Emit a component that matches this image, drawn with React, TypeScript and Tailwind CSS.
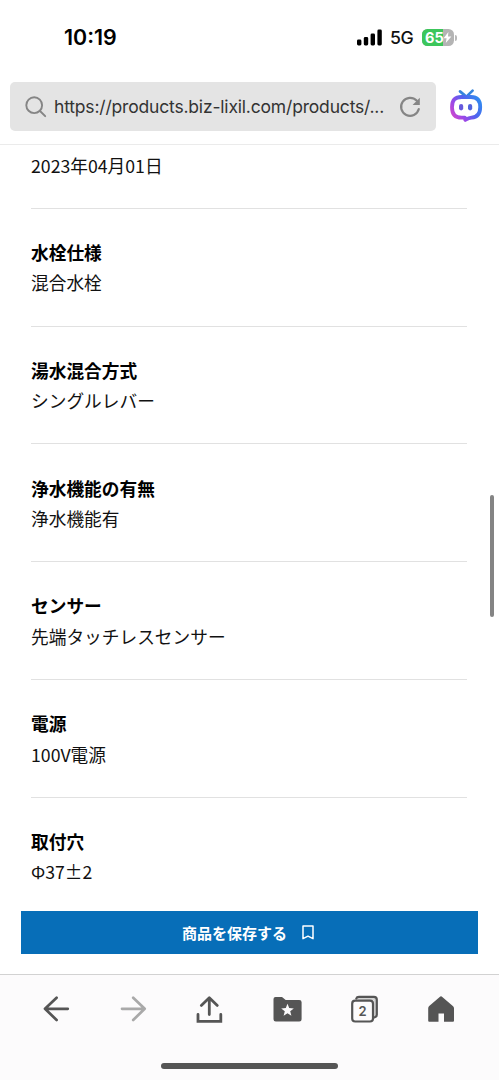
import type { ReactNode } from 'react';

const specs = [
  { label: '水栓仕様', value: '混合水栓' },
  { label: '湯水混合方式', value: 'シングルレバー' },
  { label: '浄水機能の有無', value: '浄水機能有' },
  { label: 'センサー', value: '先端タッチレスセンサー' },
  { label: '電源', value: '100V電源' },
  { label: '取付穴', value: 'Φ37±2' },
];

function StatusBar() {
  return (
    <div className="flex h-[75px] items-center pl-[64px] pr-[42px]">
      <span className="pt-px font-['Inter','Liberation_Sans',sans-serif] text-[21.4px] font-semibold leading-none text-black">
        10:19
      </span>
      <svg className="ml-auto" width="26" height="17" viewBox="0 0 26 17" fill="#000">
        <rect x="0" y="10.5" width="4.4" height="6" rx="1.4" />
        <rect x="6.8" y="8" width="4.4" height="8.5" rx="1.4" />
        <rect x="13.6" y="4.5" width="4.4" height="12" rx="1.4" />
        <rect x="20.4" y="0.6" width="4.4" height="15.9" rx="1.4" />
      </svg>
      <span className="ml-[7px] w-[24px] pt-px font-['Inter','Liberation_Sans',sans-serif] text-[17.7px] font-medium leading-none tracking-tight text-[#111]">
        5G
      </span>
      {/* Battery */}
      <div className="relative ml-[8px] h-[17px] w-[32px] overflow-hidden rounded-[5.5px] bg-[#b4b4b4]">
        <div className="h-full w-[21px] bg-[#3cc65b]" />
        <span className="absolute left-[3px] top-0 font-['Inter','Liberation_Sans',sans-serif] text-[14.5px] font-bold leading-[17px] text-white">
          65
        </span>
        <svg className="absolute left-[21px] top-[3px]" width="9" height="11" viewBox="0 0 9 11" fill="#fff">
          <path d="M5.4 0 0.6 6.2h3L2.8 11 8.4 4.6H5z" />
        </svg>
      </div>
      <div className="ml-px h-[6px] w-[2px] rounded-r-full bg-[#b9b9b9]" />
    </div>
  );
}

function AddressBar() {
  return (
    <div className="flex h-[69px] items-start pl-[10px] pt-[7px]">
      <div className="flex h-[49px] w-[426px] items-center rounded-[5px] bg-[#e4e4e4] pl-[15px]">
        <svg width="22" height="22" viewBox="0 0 22 22" fill="none" stroke="#858585" strokeWidth="1.9" strokeLinecap="round">
          <circle cx="9.2" cy="9.2" r="7.9" />
          <path d="m15 15 5.2 5.2" />
        </svg>
        <span className="ml-[7px] w-[339px] whitespace-nowrap pt-[2px] font-['Inter','Liberation_Sans',sans-serif] text-[17.5px] tracking-[-0.18px] text-[#333]">
          https://products.biz-lixil.com/products/...
        </span>
        <svg className="ml-[6px]" width="22" height="22" viewBox="0 0 22 22" fill="none">
          <path d="M17.6 4.6A9 9 0 1 0 19.8 13" stroke="#858585" strokeWidth="2.2" strokeLinecap="round" />
          <path d="M20.8 1.8v7.2h-7.2z" fill="#858585" />
        </svg>
      </div>
      <svg className="ml-[13px] mt-[6px]" width="34" height="36" viewBox="0 0 34 36" fill="none">
        <defs>
          <linearGradient id="bot" x1="2" y1="30" x2="31" y2="10" gradientUnits="userSpaceOnUse">
            <stop offset="0" stopColor="#d946c6" />
            <stop offset="0.3" stopColor="#9a48e8" />
            <stop offset="0.6" stopColor="#5263ee" />
            <stop offset="1" stopColor="#2f8df0" />
          </linearGradient>
        </defs>
        <path d="m11 3.4 4.8 4M23.6 2.6l-5.2 5" stroke="#3484dc" strokeWidth="2.7" strokeLinecap="round" />
        <path
          d="M12.500 9h9.500c6.500 0 9.200 3.300 9.200 10 0 7-3 10.200-8.600 10.600-3 .3-4.700 1.400-6.300 2.300l-.4-2.200h-3.400c-6.800 0-9.500-3.500-9.500-10.500S5.800 9 12.500 9z"
          stroke="url(#bot)"
          strokeWidth="3.800"
          strokeLinejoin="round"
        />
        <rect x="10" y="16" width="4.200" height="6.400" rx="2.100" fill="#6659dd" />
        <rect x="19" y="16" width="4.200" height="6.400" rx="2.100" fill="#5263dd" />
      </svg>
    </div>
  );
}

function SpecRow({ label, value }: { label: string; value: string }) {
  return (
    <div className="border-b border-[#e1e1e1] pb-[28px] pt-[28.2px] leading-[30.3px] last:border-b-0">
      <dt className="font-bold text-black">{label}</dt>
      <dd className="text-[#111]">{value}</dd>
    </div>
  );
}

function NavButton({ label, children }: { label: string; children: ReactNode }) {
  return (
    <button aria-label={label} className="flex h-[32px] w-[76.9px] items-center justify-center">
      {children}
    </button>
  );
}

function Toolbar() {
  return (
    <footer className="flex h-[106px] shrink-0 flex-col items-center border-t border-[#d2d2d2] bg-[#fcfbfc]">
      <nav className="flex w-full pl-[18px] pt-[18px] text-[#555]">
        <NavButton label="戻る">
          <svg width="28" height="28" viewBox="0 0 28 28" fill="none" stroke="currentColor" strokeWidth="2.700" strokeLinecap="round" strokeLinejoin="round">
            <path d="M25.800 13.800H3M14.600 2.800 3 13.800 14.600 25" />
          </svg>
        </NavButton>
        <NavButton label="進む">
          <svg className="text-[#a9a9a9]" width="28" height="28" viewBox="0 0 28 28" fill="none" stroke="currentColor" strokeWidth="2.700" strokeLinecap="round" strokeLinejoin="round">
            <path d="M3 13.800h22.700M14.200 2.800 25.700 13.800 14.200 25" />
          </svg>
        </NavButton>
        <NavButton label="共有">
          <svg width="28" height="28" viewBox="0 0 28 28" fill="none" stroke="currentColor" strokeWidth="2.800" strokeLinecap="round">
            <path d="M13.300 19.500V3M5.300 10.400 13.300 2.800l8 7.600" strokeLinejoin="round" />
            <path d="M2 19.500v6.800h22.800v-6.800" />
          </svg>
        </NavButton>
        <NavButton label="ブックマーク">
          <svg width="30" height="28" viewBox="0 0 30 28">
            <path d="M3.500 2h6.500l3.700 3H27.300a2.300 2.300 0 0 1 2.300 2.300v17a2.300 2.300 0 0 1-2.300 2.300H3.800a2.300 2.300 0 0 1-2.300-2.300V4a2 2 0 0 1 2-2z" fill="currentColor" />
            <path d="m15.500 8.800 1.700 4.300 4.600.3-3.600 2.900 1.200 4.500-3.900-2.500-3.900 2.500 1.200-4.500-3.600-2.900 4.600-.3z" fill="#fcfbfc" />
          </svg>
        </NavButton>
        <NavButton label="タブ">
          <span className="relative flex size-[28px] items-center justify-center">
            <svg className="absolute inset-0" width="28" height="28" viewBox="0 0 28 28" fill="none" stroke="currentColor" strokeWidth="2.200" strokeLinecap="round">
              <path d="M6.300 4.500Q6.600 1.900 9 1.900h14.900q2.700 0 2.700 2.700v15q0 2.600-2.700 2.900V5.200z" fill="#d4d4d4" stroke="none" />
              <rect x="2.200" y="5.700" width="20.800" height="20.800" rx="3" fill="#fcfbfc" />
              <path d="M6.300 3.500Q6.800 1.800 9 1.800h14.900q2.900 0 2.900 2.900v15q0 2.200-2.500 2.800" />
            </svg>
            <span className="relative mr-[3px] mt-[5px] font-['Inter','Liberation_Sans',sans-serif] text-[13px] font-semibold leading-none">
              2
            </span>
          </span>
        </NavButton>
        <NavButton label="ホーム">
          <svg width="28" height="28" viewBox="0 0 28 28" fill="currentColor">
            <path d="M12.700 1.900Q14 .8 15.300 1.900L25.800 11q1.200 1 1.200 2.300v12.500q0 1-1 1h-9V18.500h-5.500v8.300H2.200q-1 0-1-1V13.300q0-1.300 1-2.300z" />
          </svg>
        </NavButton>
      </nav>
      <div className="mt-[38px] h-[6px] w-[177px] rounded-full bg-[#555]" />
    </footer>
  );
}

export default function App() {
  return (
    <div className="relative flex h-[1080px] w-[499px] flex-col overflow-hidden bg-white font-['Noto_Sans_CJK_JP',sans-serif]">
      <header className="h-[145px] shrink-0 border-b border-[#ebebeb]">
        <StatusBar />
        <AddressBar />
      </header>

      <main className="flex min-h-0 flex-1 flex-col">
        <dl className="min-h-0 flex-1 overflow-hidden pl-[31px] pr-[32px] text-[17.7px]">
          <div className="border-b border-[#e1e1e1] pb-[28px] pt-[4.600px] leading-[30.3px]">
            <dd className="text-[#111]">2023年04月01日</dd>
          </div>
          {specs.map((spec) => (
            <SpecRow key={spec.label} label={spec.label} value={spec.value} />
          ))}
        </dl>
        <button className="ml-[20.5px] mb-[20px] flex h-[43px] w-[457px] shrink-0 items-center justify-center bg-[#076eb8] pr-[2px] pt-px text-[15px] font-bold text-white">
          商品を保存する
          <svg className="mb-px ml-[15px]" width="12" height="15" viewBox="0 0 12 15" fill="none" stroke="#fff" strokeWidth="1.500" strokeLinejoin="round">
            <path d="M1 1h10v12.700l-5-2.500-5 2.500z" />
          </svg>
        </button>
      </main>

      <Toolbar />

      {/* Scroll indicator */}
      <div className="absolute right-[5px] top-[495px] h-[122px] w-[4px] rounded-full bg-[#848484]" />
    </div>
  );
}
